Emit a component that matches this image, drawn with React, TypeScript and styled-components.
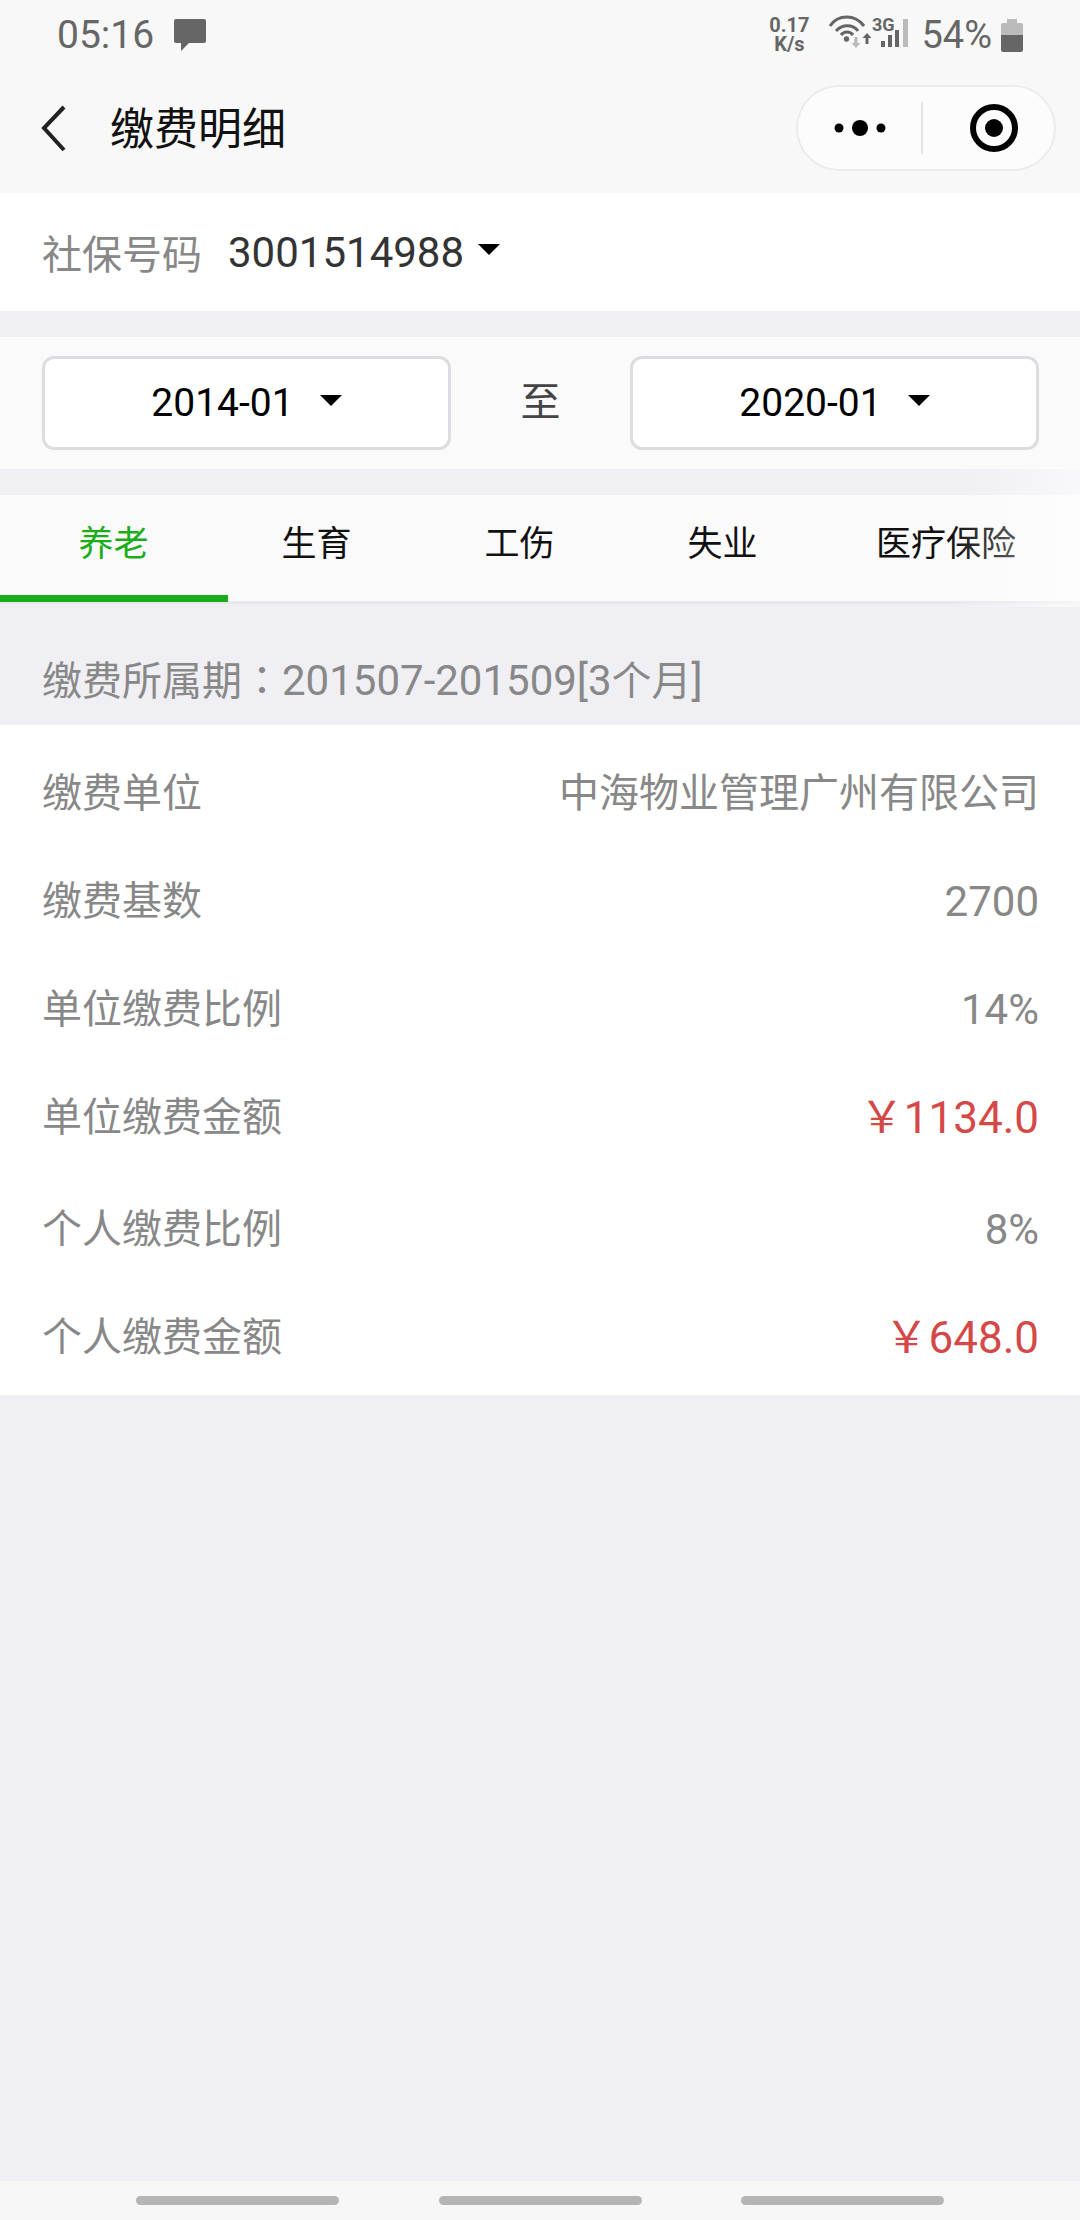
import React from 'react';
import styled, { createGlobalStyle } from 'styled-components';

const GlobalStyle = createGlobalStyle`
    html, body {
        margin: 0;
        padding: 0;
        background: #efeff4;
        font-family: Roboto, "Noto Sans CJK SC", sans-serif;
    }
    * { box-sizing: border-box; }
`;

const Page = styled.div`
    position: relative;
    width: 1080px;
    height: 2220px;
    display: flex;
    flex-direction: column;
    background: #efeff4;
    overflow: hidden;
`;
const Header = styled.header`
    height: 193px;
    background: #f8f8f8;
    flex: none;
`;
const StatusBar = styled.div`
    height: 66px;
    padding: 4px 57px 0 57px;
    display: flex;
    align-items: center;
    justify-content: space-between;
    color: #666;
`;
const StatusGroup = styled.div`
    display: flex;
    align-items: center;
`;
const Time = styled.span`
    font-size: 39px;
    margin-right: 19px;
`;
const Speed = styled.div`
    width: 44px;
    font-size: 20px;
    font-weight: 700;
    line-height: 19px;
    text-align: center;
    margin-right: 17px;
`;
const Percent = styled.span`
    font-size: 38px;
    margin: 0 9px 0 9px;
`;
const NavBar = styled.div`
    height: 106px;
    padding: 19px 24px 0 41px;
    display: flex;
    align-items: flex-start;
`;
const BackIcon = styled.svg`
    flex: none;
    margin: 19px 43px 0 0;
`;
const Title = styled.h1`
    flex: 1;
    margin: 0;
    font-size: 44px;
    font-weight: 400;
    line-height: 90px;
    color: #111;
`;
const Capsule = styled.div`
    width: 260px;
    height: 86px;
    border: 2px solid #ececec;
    border-radius: 43px;
    background: #fcfcfc;
    display: flex;
    align-items: center;
`;
const CapsulePart = styled.div<{ $inset: number }>`
    flex: 1;
    padding-left: ${p => p.$inset}px;
    display: flex;
    align-items: center;
    justify-content: center;
`;
const CapsuleDivider = styled.div`
    width: 2px;
    height: 52px;
    background: #e4e4e4;
`;
const Caret = styled.i<{ $gap: number }>`
    width: 0;
    height: 0;
    margin-left: ${p => p.$gap}px;
    margin-bottom: 6px;
    border-left: 11px solid transparent;
    border-right: 11px solid transparent;
    border-top: 11px solid #000;
`;
const NumberRow = styled.section`
    height: 118px;
    margin-bottom: 26px;
    padding: 0 42px;
    background: #fff;
    display: flex;
    align-items: center;
    font-size: 40px;
    color: #888;
`;
const NumberValue = styled.span`
    margin-left: 26px;
    font-size: 42px;
    color: #333;
`;
const DateRow = styled.section`
    height: 132px;
    margin-bottom: 26px;
    padding: 19px 41px 0 42px;
    background: #fafafa;
    display: flex;
    align-items: flex-start;
`;
const DateBox = styled.div`
    width: 409px;
    height: 94px;
    border: 3px solid #dcdde0;
    border-radius: 12px;
    background: #fff;
    display: flex;
    align-items: center;
    justify-content: center;
    font-size: 39px;
    color: #000;
`;
const DateTo = styled.div`
    flex: 1;
    line-height: 94px;
    text-align: center;
    font-size: 40px;
    color: #444;
`;
const TabBar = styled.nav`
    height: 109px;
    padding-left: 12px;
    background: #fafafa;
    border-bottom: 3px solid #e8e8ea;
    display: flex;
`;
const Tab = styled.div<{ $active?: boolean; $width: number }>`
    position: relative;
    flex: 0 0 ${p => p.$width}px;
    line-height: 100px;
    text-align: center;
    font-size: 35px;
    color: ${p => (p.$active ? '#1aad19' : '#111')};
    ${p => p.$active && `
        &::after {
            content: '';
            position: absolute;
            left: -12px;
            bottom: -1px;
            width: 228px;
            height: 7px;
            background: #1aad19;
        }
    `}
`;
const TabFade = styled.div`
    position: absolute;
    top: 468px;
    right: 0;
    width: 130px;
    height: 139px;
    background: linear-gradient(to right, rgba(255, 255, 255, 0), rgba(255, 255, 255, 0.6));
`;
const Period = styled.div`
    height: 121px;
    padding: 48px 42px 0;
    font-size: 40px;
    line-height: 52px;
    color: #888;
`;
const PeriodColon = styled.span`
    font-family: "Noto Sans CJK TC", sans-serif;
`;
const PeriodDigits = styled.span`
    font-size: 42px;
`;
const DetailList = styled.section`
    padding-top: 12px;
    height: 670px;
    background: #fff;
`;
const DetailRow = styled.div<{ $tall?: boolean }>`
    height: ${p => (p.$tall ? 112 : 108)}px;
    padding: 30px 41px 0 42px;
    display: flex;
    justify-content: space-between;
    align-items: flex-start;
    font-size: 40px;
    line-height: 54px;
    color: #888;
`;
const Digits = styled.span`
    font-size: 42px;
`;
const Money = styled.span`
    font-size: 44px;
    color: #d44848;
`;
const BottomBar = styled.footer`
    position: absolute;
    left: 0;
    right: 0;
    bottom: 0;
    height: 39px;
    padding: 15px 136px 0;
    background: #f7f7f7;
    display: flex;
    justify-content: space-between;
    align-items: flex-start;
`;
const Pill = styled.div`
    width: 203px;
    height: 9px;
    border-radius: 5px;
    background: #b5b5b5;
`;

const rows = [
    { label: '缴费单位', value: '中海物业管理广州有限公司' },
    { label: '缴费基数', value: '2700', digits: true },
    { label: '单位缴费比例', value: '14%', digits: true },
    { label: '单位缴费金额', value: '￥1134.0', money: true, tall: true },
    { label: '个人缴费比例', value: '8%', digits: true },
    { label: '个人缴费金额', value: '￥648.0', money: true },
];

const tabs = [
    { name: '养老', width: 203, active: true },
    { name: '生育', width: 203 },
    { name: '工伤', width: 203 },
    { name: '失业', width: 203 },
    { name: '医疗保险', width: 244 },
];

const renderValue = (r: typeof rows[number]) => {
    if (r.money) return <Money>{r.value}</Money>;
    if (r.digits) return <Digits>{r.value}</Digits>;
    return <span>{r.value}</span>;
};

const App = () => {
    return (<Page>
        <GlobalStyle />
        <Header>
            <StatusBar>
                <StatusGroup>
                    <Time>05:16</Time>
                    <svg width="34" height="34" viewBox="0 0 34 34">
                        <path d="M3 1h28a2 2 0 0 1 2 2v20a2 2 0 0 1-2 2H16l-8 8v-8H3a2 2 0 0 1-2-2V3a2 2 0 0 1 2-2z" fill="#666" />
                    </svg>
                </StatusGroup>
                <StatusGroup>
                    <Speed>0.17<br />K/s</Speed>
                    <svg width="84" height="40" viewBox="0 0 84 40">
                        <g fill="none" stroke="#666" strokeWidth="3">
                            <path d="M2 11C10 -1 27 -1 36 11" />
                            <path d="M8 16c6-7 17-7 22 0" />
                            <path d="M13 20c3-4 9-4 12 0" />
                        </g>
                        <circle cx="18.500" cy="24" r="2.700" fill="#666" />
                        <path d="M26.500 22h3v6h3l-4.500 5-4.500-5h2.500z" fill="#bbb" />
                        <path d="M39 18l4.500 5h-3v6h-3v-6h-3z" fill="#666" />
                        <text x="44" y="16" fontSize="18" fontWeight="700" fill="#666" fontFamily="Roboto, sans-serif">3G</text>
                        <rect x="53" y="26" width="4" height="6" fill="#666" />
                        <rect x="60" y="20" width="4" height="12" fill="#666" />
                        <rect x="67" y="15" width="4" height="17" fill="#666" />
                        <rect x="75" y="4" width="5" height="28" fill="#bbb" />
                    </svg>
                    <Percent>54%</Percent>
                    <svg width="22" height="33" viewBox="0 0 22 33">
                        <path d="M6 0h10v4h4a2 2 0 0 1 2 2v10H0V6a2 2 0 0 1 2-2h4z" fill="#bbb" />
                        <path d="M0 16h22v15a2 2 0 0 1-2 2H2a2 2 0 0 1-2-2z" fill="#666" />
                    </svg>
                </StatusGroup>
            </StatusBar>
            <NavBar>
                <BackIcon width="26" height="50" viewBox="0 0 26 50">
                    <path d="M23 3L3 24l20 22" fill="none" stroke="#222" strokeWidth="4" />
                </BackIcon>
                <Title>缴费明细</Title>
                <Capsule>
                    <CapsulePart $inset={2}>
                        <svg width="54" height="18" viewBox="0 0 54 18">
                            <circle cx="5" cy="9" r="4.500" fill="#000" />
                            <circle cx="26" cy="9" r="8" fill="#000" />
                            <circle cx="47" cy="9" r="4.500" fill="#000" />
                        </svg>
                    </CapsulePart>
                    <CapsuleDivider />
                    <CapsulePart $inset={10}>
                        <svg width="48" height="48" viewBox="0 0 48 48">
                            <circle cx="24" cy="24" r="21" fill="none" stroke="#000" strokeWidth="6" />
                            <circle cx="24" cy="24" r="9" fill="#000" />
                        </svg>
                    </CapsulePart>
                </Capsule>
            </NavBar>
        </Header>
        <NumberRow>
            社保号码<NumberValue>3001514988</NumberValue><Caret $gap={14} />
        </NumberRow>
        <DateRow>
            <DateBox>2014-01<Caret $gap={26} /></DateBox>
            <DateTo>至</DateTo>
            <DateBox>2020-01<Caret $gap={26} /></DateBox>
        </DateRow>
        <TabBar>
            {tabs.map(t => <Tab key={t.name} $active={t.active} $width={t.width}>{t.name}</Tab>)}
        </TabBar>
        <TabFade />
        <Period>缴费所属期<PeriodColon>：</PeriodColon><PeriodDigits>201507-201509[3</PeriodDigits>个月<PeriodDigits>]</PeriodDigits></Period>
        <DetailList>
            {rows.map(r => (
                <DetailRow key={r.label} $tall={r.tall}>
                    <span>{r.label}</span>
                    {renderValue(r)}
                </DetailRow>
            ))}
        </DetailList>
        <BottomBar>
            <Pill /><Pill /><Pill />
        </BottomBar>
    </Page>);
};

export default App;
